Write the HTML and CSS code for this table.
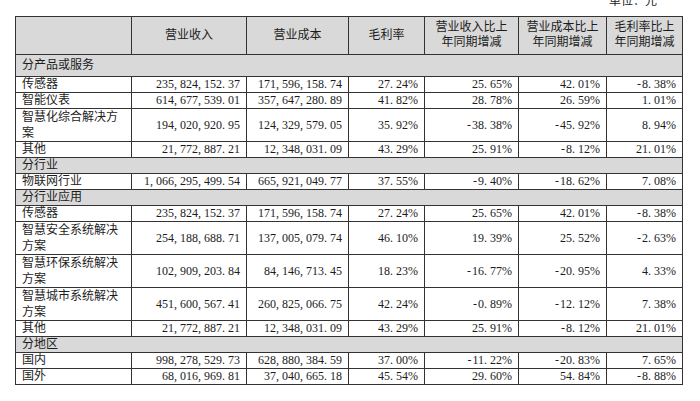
FILE: index.html
```html
<!DOCTYPE html>
<html lang="zh-CN">
<head>
<meta charset="utf-8">
<title>主营业务分析</title>
<link rel="stylesheet" href="styles.css">
</head>
<body>
<div class="unit">单位：元</div>
<table class="report">
  <colgroup>
    <col class="c1"><col class="c2"><col class="c3"><col class="c4"><col class="c5"><col class="c6"><col class="c7">
  </colgroup>
  <thead>
    <tr>
      <th></th>
      <th>营业收入</th>
      <th>营业成本</th>
      <th>毛利率</th>
      <th>营业收入比上<br>年同期增减</th>
      <th>营业成本比上<br>年同期增减</th>
      <th>毛利率比上<br>年同期增减</th>
    </tr>
  </thead>
  <tbody>
    <tr class="cat first"><td colspan="7">分产品或服务</td></tr>
    <tr>
      <td>传感器</td>
      <td class="num">235<span class="p">,</span>824<span class="p">,</span>152<span class="p">.</span>37</td>
      <td class="num">171<span class="p">,</span>596<span class="p">,</span>158<span class="p">.</span>74</td>
      <td class="num">27<span class="p">.</span>24%</td>
      <td class="num">25<span class="p">.</span>65%</td>
      <td class="num">42<span class="p">.</span>01%</td>
      <td class="num"><span class="m">-</span>8<span class="p">.</span>38%</td>
    </tr>
    <tr>
      <td>智能仪表</td>
      <td class="num">614<span class="p">,</span>677<span class="p">,</span>539<span class="p">.</span>01</td>
      <td class="num">357<span class="p">,</span>647<span class="p">,</span>280<span class="p">.</span>89</td>
      <td class="num">41<span class="p">.</span>82%</td>
      <td class="num">28<span class="p">.</span>78%</td>
      <td class="num">26<span class="p">.</span>59%</td>
      <td class="num">1<span class="p">.</span>01%</td>
    </tr>
    <tr>
      <td class="two">智慧化综合解决方案</td>
      <td class="num">194<span class="p">,</span>020<span class="p">,</span>920<span class="p">.</span>95</td>
      <td class="num">124<span class="p">,</span>329<span class="p">,</span>579<span class="p">.</span>05</td>
      <td class="num">35<span class="p">.</span>92%</td>
      <td class="num"><span class="m">-</span>38<span class="p">.</span>38%</td>
      <td class="num"><span class="m">-</span>45<span class="p">.</span>92%</td>
      <td class="num">8<span class="p">.</span>94%</td>
    </tr>
    <tr>
      <td>其他</td>
      <td class="num">21<span class="p">,</span>772<span class="p">,</span>887<span class="p">.</span>21</td>
      <td class="num">12<span class="p">,</span>348<span class="p">,</span>031<span class="p">.</span>09</td>
      <td class="num">43<span class="p">.</span>29%</td>
      <td class="num">25<span class="p">.</span>91%</td>
      <td class="num"><span class="m">-</span>8<span class="p">.</span>12%</td>
      <td class="num">21<span class="p">.</span>01%</td>
    </tr>
    <tr class="cat"><td colspan="7">分行业</td></tr>
    <tr>
      <td>物联网行业</td>
      <td class="num">1<span class="p">,</span>066<span class="p">,</span>295<span class="p">,</span>499<span class="p">.</span>54</td>
      <td class="num">665<span class="p">,</span>921<span class="p">,</span>049<span class="p">.</span>77</td>
      <td class="num">37<span class="p">.</span>55%</td>
      <td class="num"><span class="m">-</span>9<span class="p">.</span>40%</td>
      <td class="num"><span class="m">-</span>18<span class="p">.</span>62%</td>
      <td class="num">7<span class="p">.</span>08%</td>
    </tr>
    <tr class="cat"><td colspan="7">分行业应用</td></tr>
    <tr>
      <td>传感器</td>
      <td class="num">235<span class="p">,</span>824<span class="p">,</span>152<span class="p">.</span>37</td>
      <td class="num">171<span class="p">,</span>596<span class="p">,</span>158<span class="p">.</span>74</td>
      <td class="num">27<span class="p">.</span>24%</td>
      <td class="num">25<span class="p">.</span>65%</td>
      <td class="num">42<span class="p">.</span>01%</td>
      <td class="num"><span class="m">-</span>8<span class="p">.</span>38%</td>
    </tr>
    <tr>
      <td class="two">智慧安全系统解决方案</td>
      <td class="num">254<span class="p">,</span>188<span class="p">,</span>688<span class="p">.</span>71</td>
      <td class="num">137<span class="p">,</span>005<span class="p">,</span>079<span class="p">.</span>74</td>
      <td class="num">46<span class="p">.</span>10%</td>
      <td class="num">19<span class="p">.</span>39%</td>
      <td class="num">25<span class="p">.</span>52%</td>
      <td class="num"><span class="m">-</span>2<span class="p">.</span>63%</td>
    </tr>
    <tr>
      <td class="two">智慧环保系统解决方案</td>
      <td class="num">102<span class="p">,</span>909<span class="p">,</span>203<span class="p">.</span>84</td>
      <td class="num">84<span class="p">,</span>146<span class="p">,</span>713<span class="p">.</span>45</td>
      <td class="num">18<span class="p">.</span>23%</td>
      <td class="num"><span class="m">-</span>16<span class="p">.</span>77%</td>
      <td class="num"><span class="m">-</span>20<span class="p">.</span>95%</td>
      <td class="num">4<span class="p">.</span>33%</td>
    </tr>
    <tr>
      <td class="two">智慧城市系统解决方案</td>
      <td class="num">451<span class="p">,</span>600<span class="p">,</span>567<span class="p">.</span>41</td>
      <td class="num">260<span class="p">,</span>825<span class="p">,</span>066<span class="p">.</span>75</td>
      <td class="num">42<span class="p">.</span>24%</td>
      <td class="num"><span class="m">-</span>0<span class="p">.</span>89%</td>
      <td class="num"><span class="m">-</span>12<span class="p">.</span>12%</td>
      <td class="num">7<span class="p">.</span>38%</td>
    </tr>
    <tr>
      <td>其他</td>
      <td class="num">21<span class="p">,</span>772<span class="p">,</span>887<span class="p">.</span>21</td>
      <td class="num">12<span class="p">,</span>348<span class="p">,</span>031<span class="p">.</span>09</td>
      <td class="num">43<span class="p">.</span>29%</td>
      <td class="num">25<span class="p">.</span>91%</td>
      <td class="num"><span class="m">-</span>8<span class="p">.</span>12%</td>
      <td class="num">21<span class="p">.</span>01%</td>
    </tr>
    <tr class="cat"><td colspan="7">分地区</td></tr>
    <tr>
      <td>国内</td>
      <td class="num">998<span class="p">,</span>278<span class="p">,</span>529<span class="p">.</span>73</td>
      <td class="num">628<span class="p">,</span>880<span class="p">,</span>384<span class="p">.</span>59</td>
      <td class="num">37<span class="p">.</span>00%</td>
      <td class="num"><span class="m">-</span>11<span class="p">.</span>22%</td>
      <td class="num"><span class="m">-</span>20<span class="p">.</span>83%</td>
      <td class="num">7<span class="p">.</span>65%</td>
    </tr>
    <tr>
      <td>国外</td>
      <td class="num">68<span class="p">,</span>016<span class="p">,</span>969<span class="p">.</span>81</td>
      <td class="num">37<span class="p">,</span>040<span class="p">,</span>665<span class="p">.</span>18</td>
      <td class="num">45<span class="p">.</span>54%</td>
      <td class="num">29<span class="p">.</span>60%</td>
      <td class="num">54<span class="p">.</span>84%</td>
      <td class="num"><span class="m">-</span>8<span class="p">.</span>88%</td>
    </tr>
  </tbody>
</table>
</body>
</html>
```

FILE: styles.css
```css
html, body {
  margin: 0;
  padding: 0;
  background: #ffffff;
}

body {
  font-family: "Liberation Serif", "Noto Sans CJK SC", serif;
  font-size: 12px;
  color: #1c1c1c;
  overflow: hidden;
}

.unit {
  height: 15px;
  line-height: 15px;
  margin-top: -6px;
  margin-bottom: 7px;
  text-align: right;
  padding-right: 43px;
}

.report {
  margin-left: 15px;
  width: 667px;
  table-layout: fixed;
  border-collapse: collapse;
}

.c1 { width: 116px; }
.c2 { width: 115px; }
.c3 { width: 102px; }
.c4 { width: 76px; }
.c5 { width: 94px; }
.c6 { width: 88px; }
.c7 { width: 76px; }

.report th,
.report td {
  border: 1px solid #333333;
  padding: 0 6px;
  line-height: 15px;
  font-weight: normal;
  vertical-align: middle;
}

.report th {
  background: #d9d9d9;
  text-align: center;
  line-height: 15px;
  padding: 3px 2px 4px;
  height: 30px;
}

.report td.num {
  text-align: right;
  white-space: nowrap;
}

.report td.two {
  line-height: 16px;
}

.report tr.cat td {
  background: #d9d9d9;
}

.report tr.cat.first td {
  padding-top: 3px;
  padding-bottom: 3px;
}

.p {
  letter-spacing: 3px;
}

.m {
  letter-spacing: 1px;
}
```
